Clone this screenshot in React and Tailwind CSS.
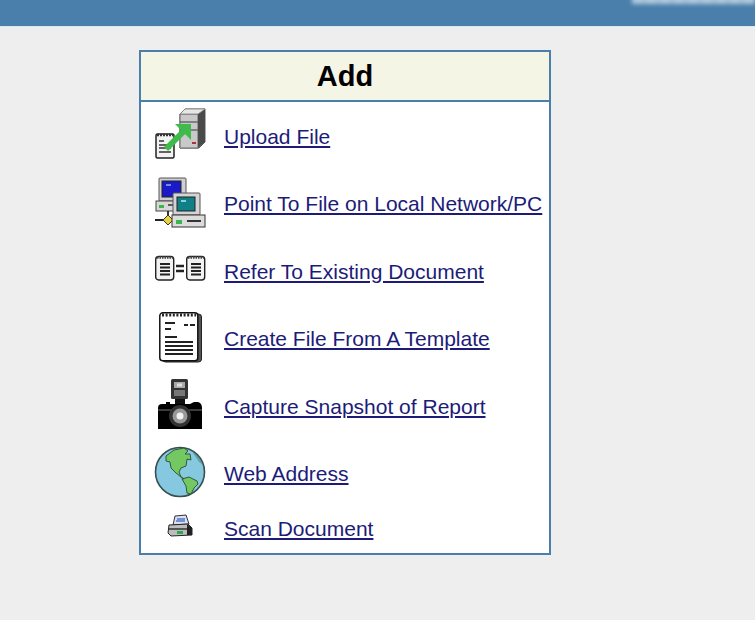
const UploadIcon = () => (
  <svg width="52" height="52" viewBox="0 0 52 52">
    <path d="M26 6 L31 1 H51 V34 L45 40 H26 Z" fill="#bdbdbd" stroke="#5a5a5a" strokeWidth="1" />
    <path d="M26 6 H44 V40 H26 Z" fill="#c9c9c9" stroke="#666" strokeWidth="1" />
    <path d="M44 6 L51 1 V34 L44 40 Z" fill="#4a4a4a" />
    <path d="M26 6 L31 1 H51 L44 6 Z" fill="#e6e6e6" stroke="#777" strokeWidth="0.7" />
    <path d="M26 14 H44 M26 22 H44" stroke="#6a6a6a" strokeWidth="1.6" />
    <rect x="38" y="34" width="4" height="2" fill="#b03040" />
    <rect x="2" y="26" width="18" height="24" rx="1.5" fill="#f2f2f2" stroke="#222" strokeWidth="1.5" />
    <path d="M3 27 h16" stroke="#333" strokeWidth="2.5" strokeDasharray="2 1" />
    <path d="M5 33 h5 M5 37 h12 M5 40 h12 M5 44 h12" stroke="#333" strokeWidth="1.5" />
    <path d="M12 41 L30 23" stroke="#3fbb4c" strokeWidth="6" />
    <path d="M21 16 L37 16 L37 32 Z" fill="#3fbb4c" />
  </svg>
);
const NetworkIcon = () => (
  <svg width="52" height="52" viewBox="0 0 52 52">
    <rect x="5" y="2" width="27" height="23" rx="1" fill="#cfcfcf" stroke="#555" />
    <rect x="8" y="5" width="19" height="16" fill="#1a1ac8" stroke="#222" />
    <rect x="12" y="8" width="5" height="2" fill="#6a8fe0" />
    <rect x="2" y="25" width="32" height="10" fill="#d8d8d8" stroke="#444" />
    <rect x="5" y="29" width="5" height="3" fill="#3cb54a" />
    <path d="M14 29 h14" stroke="#333" strokeWidth="1.5" />
    <path d="M14 35 V44 M1 44 H26" stroke="#222" strokeWidth="1.8" />
    <path d="M14 39 L19 44 L14 49 L9 44 Z" fill="#e8d23c" stroke="#333" />
    <rect x="19" y="17" width="27" height="22" rx="1" fill="#d4d4d4" stroke="#555" />
    <rect x="23" y="21" width="18" height="14" fill="#107f86" stroke="#222" />
    <rect x="27" y="24" width="5" height="2" fill="#7fd6d6" />
    <rect x="18" y="39" width="33" height="12" fill="#dcdcdc" stroke="#333" />
    <rect x="22" y="44" width="6" height="4" fill="#3cb54a" />
    <path d="M33 45 h14" stroke="#222" strokeWidth="1.8" />
  </svg>
);
const Pad = ({ x }) => (
  <g transform={`translate(${x} 0)`}>
    <rect x="0.7" y="1.5" width="18" height="23.5" rx="3" fill="#f2f2f2" stroke="#222" strokeWidth="1.4" />
    <path d="M2 2.5 h16" stroke="#444" strokeWidth="2.4" strokeDasharray="1.5 1" />
    <path d="M5 9 h10 M5 12.5 h10 M5 16 h10 M5 19.5 h10" stroke="#222" strokeWidth="2" />
  </g>
);
const ReferIcon = () => (
  <svg width="52" height="28" viewBox="0 0 52 28">
    <Pad x={1} />
    <Pad x={32} />
    <path d="M22 11 h8 M22 16 h8" stroke="#222" strokeWidth="2.6" />
  </svg>
);
const TemplateIcon = () => (
  <svg width="46" height="52" viewBox="0 0 46 52">
    <rect x="5.5" y="3" width="39" height="48" rx="3" fill="#555" stroke="#222" />
    <rect x="2.8" y="1.8" width="38" height="48" rx="3" fill="#fff" stroke="#111" strokeWidth="1.5" />
    <path d="M5 4 h34" stroke="#222" strokeWidth="3" strokeDasharray="2 1.6" />
    <path d="M8 12 h10 M8 18 h6 M27 14 h4 M33 14 h5 M8 26 h12 M8 31 h28 M8 35 h28 M8 39 h28 M8 43 h28" stroke="#222" strokeWidth="2" />
  </svg>
);
const CameraIcon = () => (
  <svg width="46" height="52" viewBox="0 0 46 52">
    <rect x="14" y="1" width="17" height="20" rx="1.5" fill="#333" />
    <rect x="17" y="4" width="11" height="6" fill="#a8a8a8" />
    <rect x="20" y="5.5" width="5" height="3" fill="#e0e0e0" />
    <rect x="17" y="12" width="11" height="6" fill="#777" />
    <rect x="18" y="21" width="10" height="5" fill="#111" />
    <path d="M1 30 Q1 26 5 26 H9 V24 H13 V26 H33 L37 24 H41 Q45 25 45 30 V51 H1 Z" fill="#000" />
    <path d="M1 32 H45" stroke="#777" strokeWidth="1" />
    <circle cx="23" cy="38" r="11" fill="#333" />
    <circle cx="23" cy="38" r="7.5" fill="#999" />
    <circle cx="23" cy="38" r="3.5" fill="#f2f2f2" />
  </svg>
);
const GlobeIcon = () => (
  <svg width="52" height="52" viewBox="0 0 52 52">
    <circle cx="26" cy="26" r="24.5" fill="#86c8e0" stroke="#37504f" strokeWidth="1.6" />
    <path d="M12 10 L20 4 L30 2 L34 5 L31 8 L36 8 L37 14 L33 13 L32 20 L27 22 L25 26 L27 31 L22 27 L17 22 L16 16 L12 15 Z" fill="#74c862" stroke="#2f5a3a" strokeWidth="1" />
    <path d="M28 33 L35 31 L43 35 L44 38 L40 42 L37 48 L33 47 L32 40 Z" fill="#74c862" stroke="#2f5a3a" strokeWidth="1" />
    <path d="M27 31 L30 33" stroke="#2f5a3a" strokeWidth="1.4" />
    <path d="M38 5 A24.5 24.5 0 0 1 49 19 L45 16 L41 10 Z" fill="#3f7a70" opacity=".5" />
  </svg>
);
const ScanIcon = () => (
  <svg width="26" height="24" viewBox="0 0 26 24">
    <path d="M8 2 L19 1 L22 10 L6 11 Z" fill="#d8e0f5" stroke="#333" />
    <path d="M10 5 h8 M9 7 h9" stroke="#5078c8" strokeWidth="1.3" />
    <path d="M2 11 L21 10 L25 14 V21 L4 22 L1 19 Z" fill="#bdbdbd" stroke="#222" />
    <path d="M20 10 L25 14 V21 L20 21 Z" fill="#222" />
    <path d="M2 15 H20" stroke="#333" strokeWidth="1.5" />
    <rect x="10" y="17" width="6" height="3" fill="#2fa84a" />
  </svg>
);

const rows = [
  { icon: <UploadIcon />, label: "Upload File", h: "h-[68px]" },
  { icon: <NetworkIcon />, label: "Point To File on Local Network/PC", h: "h-[67px]" },
  { icon: <ReferIcon />, label: "Refer To Existing Document", h: "h-[68px]" },
  { icon: <TemplateIcon />, label: "Create File From A Template", h: "h-[67px]" },
  { icon: <CameraIcon />, label: "Capture Snapshot of Report", h: "h-[68px]" },
  { icon: <GlobeIcon />, label: "Web Address", h: "h-[67px]" },
  { icon: <ScanIcon />, label: "Scan Document", h: "h-[46px] pb-1" },
];

export default function App() {
  return (
    <div className="relative w-[755px] h-[620px] overflow-hidden bg-[#eeeeee] font-['Liberation_Sans',Arial,sans-serif]">
      <header className="relative h-[27px] bg-[#4a7fab] border-b border-[#d9e8f2] overflow-hidden">
        <div aria-hidden="true" className="absolute left-[632px] -top-[9px] w-[123px] h-[13px] bg-[repeating-linear-gradient(90deg,#dfe9f2_0px,#dfe9f2_10px,#b9cfe0_12px,#dfe9f2_14px)] opacity-70 blur-[2px]" />
      </header>
      <main className="ml-[139px] mt-[23px] w-[412px] border-2 border-[#4a7fab] bg-white">
        <h1 className="h-[46px] pt-[2px] flex items-center justify-center bg-[#f5f5e6] border-b-2 border-[#4a7fab] text-[29px] font-bold text-black box-content">
          Add
        </h1>
        <div className="flex flex-col">
          {rows.map((r) => (
            <div key={r.label} className={`flex items-center ${r.h}`}>
              <div className="w-[83px] pl-[12px] pr-[17px] pb-1 shrink-0 flex justify-center blur-[0.4px]">{r.icon}</div>
              <a href="#" className="text-[21px] leading-none text-[#1c1c78] underline whitespace-nowrap">
                {r.label}
              </a>
            </div>
          ))}
        </div>
      </main>
    </div>
  );
}
